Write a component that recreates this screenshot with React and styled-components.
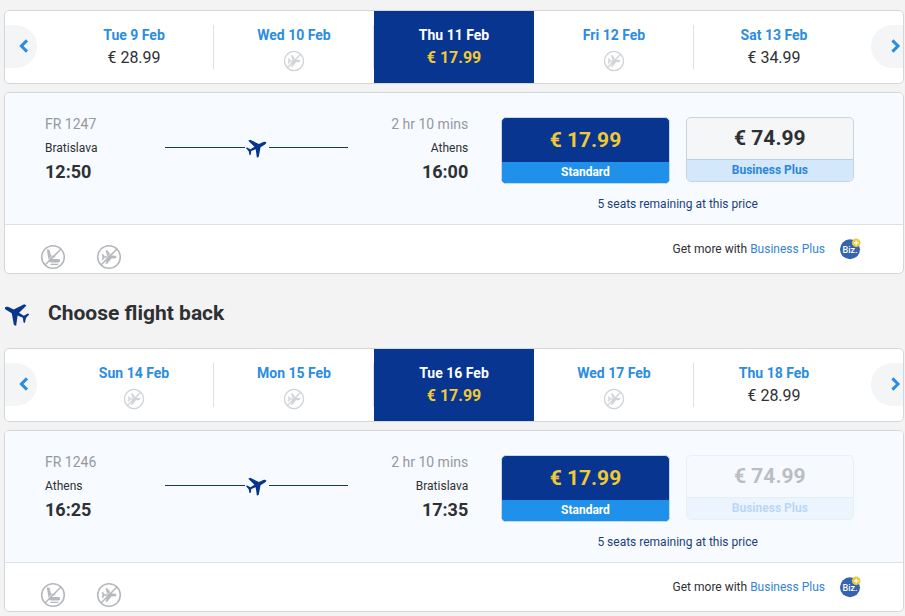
import React from "react";
import styled, { createGlobalStyle, css } from "styled-components";

const GlobalStyle = createGlobalStyle`
  *, *::before, *::after { box-sizing: border-box; }
  body {
    margin: 0;
    background: #f3f3f3;
    color: #2e3033;
    font-family: Roboto, "Liberation Sans", sans-serif;
    font-size: 14px;
  }
  button {
    margin: 0;
    padding: 0;
    border: 0;
    background: none;
    color: inherit;
    font: inherit;
    cursor: pointer;
  }
  svg { display: block; }
`;

const Page = styled.main`
  padding: 10px 1px 4px 4px;
`;

const Leg = styled.section`
  display: flex;
  flex-direction: column;
  gap: 8px;
`;

const Card = styled.div`
  border: 1px solid #d2d7db;
  border-radius: 5px;
  background: #fff;
  overflow: hidden;
`;

const Carousel = styled(Card)`
  display: flex;
  align-items: center;
  justify-content: space-between;
  gap: 17px;
`;

const Arrow = styled.button`
  flex: none;
  width: 32px;
  height: 43px;
  margin-bottom: 2px;
  padding-left: ${(p) => (p.$side === "left" ? "11px" : "16px")};
  background: #f3f5f7;
  color: #2b8ddf;
  border-radius: ${(p) => (p.$side === "left" ? "0 22px 22px 0" : "22px 0 0 22px")};
`;

const Days = styled.ul`
  display: flex;
  flex: 1;
  margin: 0;
  padding: 0;
  list-style: none;
`;

const DayItem = styled.li`
  display: flex;
  flex: 1;
  align-items: center;
`;

const Divider = styled.span`
  width: 1px;
  height: 44px;
  margin-left: -1px;
  background: #dfe2e5;
`;

const Day = styled.button`
  display: flex;
  flex: 1;
  flex-direction: column;
  align-items: center;
  gap: 3px;
  height: 72px;
  padding-top: 14px;
  line-height: 20px;
  color: #2e3033;
  ${(p) =>
    p.$active &&
    css`
      background: #073590;
      color: #f1c933;
      font-weight: 700;
    `}
`;

const DayName = styled.span`
  font-weight: 700;
  color: ${(p) => (p.$active ? "#fff" : "#2b8ddf")};
`;

const DayPrice = styled.span`
  font-size: 16px;
`;

const Unavailable = styled.span`
  padding-top: 2px;
  color: #d0d3d7;
`;

const Flight = styled.div`
  display: grid;
  grid-template-columns: minmax(0, 6fr) minmax(0, 5fr);
  gap: 33px;
  padding: 20px 49px 9px 40px;
  background: #f7fbff;
  border-bottom: 1px solid #dbe1e7;
`;

const Route = styled.div`
  display: grid;
  grid-template-columns: 120px 1fr 120px;
`;

const Stop = styled.div`
  text-align: ${(p) => p.$align};
`;

const Meta = styled.div`
  line-height: 22px;
  color: #94989f;
`;

const City = styled.div`
  font-size: 12px;
  line-height: 26px;
`;

const Time = styled.div`
  font-size: 18px;
  line-height: 22px;
  font-weight: 700;
`;

const Path = styled.div`
  display: flex;
  align-items: center;
  gap: 2px;
  height: 20px;
  margin-top: 24px;
  color: #073590;
`;

const Line = styled.span`
  flex: 1;
  height: 1px;
  background: #123a5e;
`;

const Fares = styled.div`
  display: grid;
  grid-template-columns: 1fr 1fr;
  align-items: start;
  column-gap: 16px;
  padding-top: 4px;
`;

const Fare = styled.button`
  display: flex;
  flex-direction: column;
  border: 1px solid #c5d4df;
  border-radius: 5px;
  overflow: hidden;
  text-align: center;
  font-weight: 700;
  background: #f4f6f7;
  ${(p) =>
    p.$selected &&
    css`
      background: #073590;
      border-color: #c4d8f0;
      color: #f1c933;
    `}
  &:disabled {
    opacity: 0.3;
    cursor: default;
  }
`;

const FarePrice = styled.span`
  width: 100%;
  font-size: 21px;
  line-height: ${(p) => (p.$selected ? "44px" : "41px")};
`;

const FareName = styled.span`
  width: 100%;
  font-size: 12px;
  line-height: 21px;
  color: ${(p) => (p.$selected ? "#fff" : "#2b86dc")};
  background: ${(p) => (p.$selected ? "#2091eb" : "#d3e8fa")};
  border-top: ${(p) => (p.$selected ? "0" : "1px solid #b5d2e8")};
`;

const Seats = styled.p`
  grid-column: 1 / -1;
  margin: 9px 0 0;
  font-size: 12px;
  line-height: 22px;
  text-align: center;
  color: #1b3f78;
`;

const Footer = styled.div`
  display: flex;
  align-items: center;
  justify-content: space-between;
  height: 48px;
  padding: 0 42px 0 35px;
`;

const Restrictions = styled.div`
  display: flex;
  gap: 30px;
  padding-top: 16px;
  color: #b5b8bd;
`;

const Upsell = styled.div`
  display: flex;
  align-items: center;
  gap: 14px;
  font-size: 12px;
`;

const Link = styled.a`
  color: #3384d8;
  text-decoration: none;
`;

const Heading = styled.h2`
  display: flex;
  align-items: center;
  gap: 20px;
  height: 74px;
  margin: 0;
  padding-top: 4px;
  font-size: 21px;
  font-weight: 700;
`;

const HeadingIcon = styled.span`
  color: #073590;
`;

const PLANE =
  "M22 17.2v-2.2L13.9 8.8 13.6 3.8c-.1-1.4-.8-2.6-1.6-2.6s-1.5 1.2-1.6 2.6l-.3 5L2 15v2.2l8.6-2.9.5 4.9-3.4 2.3v1.4L12 21.8l4.3 1.1v-1.4l-3.4-2.3.5-4.9z";

function Plane({ size, angle }) {
  return (
    <svg width={size} height={size} viewBox="1.5 1.5 21 21" overflow="visible" aria-hidden="true">
      <path d={PLANE} fill="currentColor" transform={`rotate(${angle} 12 12)`} />
    </svg>
  );
}

function NoFlight({ size }) {
  return (
    <svg width={size} height={size} viewBox="0 0 26 26" role="img" aria-label="No flights">
      <path
        d={PLANE}
        fill="currentColor"
        stroke="currentColor"
        strokeWidth="0.8"
        transform="translate(13.2 13) rotate(90) scale(.66) translate(-12 -12)"
      />
      <path d="M4.4 20 20 4.4" stroke="#fff" strokeWidth="0.7" />
      <circle cx="13" cy="13" r="11.3" fill="none" stroke="currentColor" strokeWidth="1.6" />
      <path d="M5 21 21 5" stroke="currentColor" strokeWidth="1.6" />
    </svg>
  );
}

function NoSeat({ size }) {
  return (
    <svg width={size} height={size} viewBox="0 0 26 26" role="img" aria-label="No seat">
      <path
        d="M6.8 5.8c1-.5 2.6-.4 2.9.7l1.3 5.1h4.2v1.7h-3.6l.5 1.8h6.3c1.1 0 1.7.7 1.7 1.7s-.7 1.6-1.7 1.6h-7.2c-1.4 0-2.2-.8-2.5-2z"
        fill="currentColor"
      />
      <path d="M10.5 20.4h7.8" stroke="currentColor" strokeWidth="1.4" />
      <path d="M4.4 20 20 4.4" stroke="#fff" strokeWidth="0.8" />
      <circle cx="13" cy="13" r="11.3" fill="none" stroke="currentColor" strokeWidth="1.6" />
      <path d="M5 21 21 5" stroke="currentColor" strokeWidth="1.6" />
    </svg>
  );
}

function Chevron({ side }) {
  return (
    <svg width="16" height="16" viewBox="0 0 16 16" aria-hidden="true">
      <path
        d={side === "left" ? "M11 2.4 5.4 8l5.6 5.6" : "M5.4 2.4 11 8l-5.6 5.6"}
        fill="none"
        stroke="currentColor"
        strokeWidth="3"
      />
    </svg>
  );
}

function BizBadge() {
  return (
    <svg width="22" height="22" viewBox="0 0 22 22" aria-hidden="true">
      <circle cx="11" cy="11.2" r="10" fill="#3663ad" />
      <text
        x="11"
        y="14.8"
        textAnchor="middle"
        fill="#fff"
        fontFamily="Roboto, sans-serif"
        fontSize="9"
        fontWeight="500"
      >
        Biz.
      </text>
      <circle cx="17.2" cy="4.8" r="4.3" fill="#e9c840" />
      <path d="M14.8 4.8h4.8M17.2 2.4v4.8" stroke="#fff" strokeWidth="1.2" />
    </svg>
  );
}

function DayCarousel({ days, active }) {
  return (
    <Carousel>
      <Arrow $side="left" aria-label="Earlier dates">
        <Chevron side="left" />
      </Arrow>
      <Days>
        {days.map(([name, price], i) => {
          const isActive = i === active;
          return (
            <DayItem key={name}>
              <Day $active={isActive} aria-pressed={isActive}>
                <DayName $active={isActive}>{name}</DayName>
                {price ? (
                  <DayPrice>{price}</DayPrice>
                ) : (
                  <Unavailable>
                    <NoFlight size={22} />
                  </Unavailable>
                )}
              </Day>
              {!isActive && i < days.length - 1 && <Divider />}
            </DayItem>
          );
        })}
      </Days>
      <Arrow $side="right" aria-label="Later dates">
        <Chevron side="right" />
      </Arrow>
    </Carousel>
  );
}

function FlightCard({ flight }) {
  return (
    <Card>
      <Flight>
        <Route>
          <Stop $align="left">
            <Meta>{flight.number}</Meta>
            <City>{flight.from}</City>
            <Time>{flight.departs}</Time>
          </Stop>
          <Path>
            <Line />
            <Plane size={20} angle={63} />
            <Line />
          </Path>
          <Stop $align="right">
            <Meta>{flight.duration}</Meta>
            <City>{flight.to}</City>
            <Time>{flight.arrives}</Time>
          </Stop>
        </Route>
        <Fares>
          <Fare $selected>
            <FarePrice $selected>€ 17.99</FarePrice>
            <FareName $selected>Standard</FareName>
          </Fare>
          <Fare disabled={flight.plusDisabled}>
            <FarePrice>€ 74.99</FarePrice>
            <FareName>Business Plus</FareName>
          </Fare>
          <Seats>5 seats remaining at this price</Seats>
        </Fares>
      </Flight>
      <Footer>
        <Restrictions>
          <NoSeat size={26} />
          <NoFlight size={26} />
        </Restrictions>
        <Upsell>
          <span>
            Get more with <Link href="#business-plus">Business Plus</Link>
          </span>
          <BizBadge />
        </Upsell>
      </Footer>
    </Card>
  );
}

const outboundDays = [
  ["Tue 9 Feb", "€ 28.99"],
  ["Wed 10 Feb", null],
  ["Thu 11 Feb", "€ 17.99"],
  ["Fri 12 Feb", null],
  ["Sat 13 Feb", "€ 34.99"],
];

const returnDays = [
  ["Sun 14 Feb", null],
  ["Mon 15 Feb", null],
  ["Tue 16 Feb", "€ 17.99"],
  ["Wed 17 Feb", null],
  ["Thu 18 Feb", "€ 28.99"],
];

const outbound = {
  number: "FR 1247",
  from: "Bratislava",
  departs: "12:50",
  duration: "2 hr 10 mins",
  to: "Athens",
  arrives: "16:00",
};

const inbound = {
  number: "FR 1246",
  from: "Athens",
  departs: "16:25",
  duration: "2 hr 10 mins",
  to: "Bratislava",
  arrives: "17:35",
  plusDisabled: true,
};

export default function App() {
  return (
    <>
      <GlobalStyle />
      <Page>
        <Leg>
          <DayCarousel days={outboundDays} active={2} />
          <FlightCard flight={outbound} />
        </Leg>
        <Heading>
          <HeadingIcon>
            <Plane size={24} angle={-63} />
          </HeadingIcon>
          Choose flight back
        </Heading>
        <Leg>
          <DayCarousel days={returnDays} active={2} />
          <FlightCard flight={inbound} />
        </Leg>
      </Page>
    </>
  );
}
